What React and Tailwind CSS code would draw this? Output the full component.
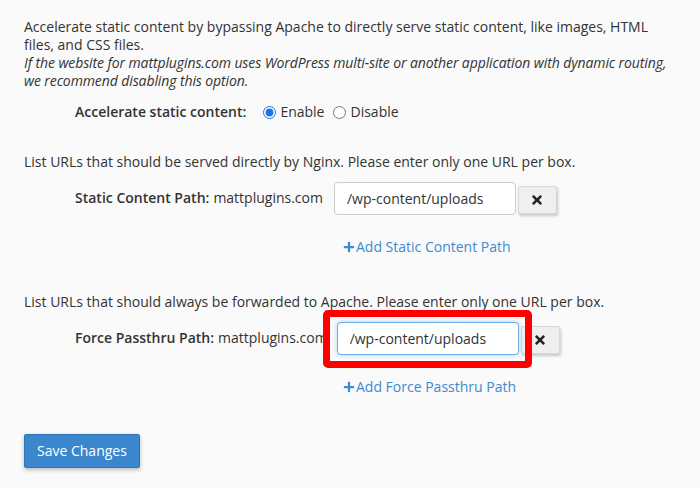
import React, { useState } from "react";
import { FaTimes, FaPlus } from "react-icons/fa";

const PathRow = ({ label, value, focused, inputGap = "ml-[11px]" }) => (
  <div className="flex items-start">
    <span className="font-semibold mt-[7px] ml-[51px]">{label}</span>
    <span className="ml-[4px] mt-[7px]">mattplugins.com</span>
    <div className={`relative ${inputGap}`}>
      <input
        type="text"
        defaultValue={value}
        className={`block w-[182px] h-[33px] rounded-[4px] bg-white px-[12px] text-[14px] text-[#333] outline-none border ${
          focused ? "border-[#66afe9] shadow-[0_0_4px_rgba(102,175,233,0.5)]" : "border-[#ccc]"
        }`}
      />
      {focused && (
        <div className="absolute left-[-14px] top-[-12px] right-[-13px] bottom-[-13px] border-[7px] border-[#ff0000] rounded-[5px] pointer-events-none z-10" />
      )}
    </div>
    <button className="ml-[2px] mt-[4px] w-[39px] h-[28px] flex items-center justify-center bg-[#efefef] border border-[#d6d6d6] rounded-[2px] shadow-[1px_2px_3px_rgba(0,0,0,0.2)] text-[#222]">
      <FaTimes className="w-[12px] h-[14px]" />
    </button>
  </div>
);

const AddLink = ({ text }) => (
  <a href="#" className="flex items-center ml-[319px] text-[#3d8bd0] leading-[18px]">
    <FaPlus className="w-[12px] h-[12px] text-[#3d8bd0]" />
    <span className="ml-[1px]">{text}</span>
  </a>
);

export default function App() {
  const [mode, setMode] = useState("enable");

  return (
    <div
      className="w-[700px] h-[488px] bg-[#fafafa] text-[#333] text-[14px] leading-[18px] px-6 pt-[18px] overflow-hidden"
      style={{ fontFamily: '"Open Sans", "Liberation Sans", sans-serif' }}
    >
      <p className="whitespace-nowrap">
        Accelerate static content by bypassing Apache to directly serve static content, like images, HTML
        <br />
        files, and CSS files.
        <br />
        <i className="tracking-[-0.1px]">
          If the website for mattplugins.com uses WordPress multi-site or another application with dynamic routing,
          <br />
          we recommend disabling this option.
        </i>
      </p>

      <div className="flex items-center mt-[12px] h-[20px]">
        <span className="font-semibold ml-[51px]">Accelerate static content:</span>
        <label className="flex items-center ml-[17px]">
          <input
            type="radio"
            name="accel"
            checked={mode === "enable"}
            onChange={() => setMode("enable")}
            className="w-[13px] h-[13px] m-0 accent-[#1a73e8]"
          />
          <span className="ml-[4px]">Enable</span>
        </label>
        <label className="flex items-center ml-[9px]">
          <input
            type="radio"
            name="accel"
            checked={mode === "disable"}
            onChange={() => setMode("disable")}
            className="w-[13px] h-[13px] m-0"
          />
          <span className="ml-[4px]">Disable</span>
        </label>
      </div>

      <p className="mt-[31px]">List URLs that should be served directly by Nginx. Please enter only one URL per box.</p>
      <div className="mt-[11px]">
        <PathRow label="Static Content Path:" value="/wp-content/uploads" />
      </div>
      <div className="mt-[23px]">
        <AddLink text="Add Static Content Path" />
      </div>

      <p className="mt-[37px]">List URLs that should always be forwarded to Apache. Please enter only one URL per box.</p>
      <div className="mt-[11px]">
        <PathRow label="Force Passthru Path:" value="/wp-content/uploads" focused inputGap="ml-[9px]" />
      </div>
      <div className="mt-[23px]">
        <AddLink text="Add Force Passthru Path" />
      </div>

      <button className="block mt-[38px] h-[34px] px-[12px] bg-[#3a87cd] border border-[#2e74b5] rounded-[2px] text-white shadow-[0_2px_4px_rgba(0,0,0,0.25)]">
        Save Changes
      </button>
    </div>
  );
}
